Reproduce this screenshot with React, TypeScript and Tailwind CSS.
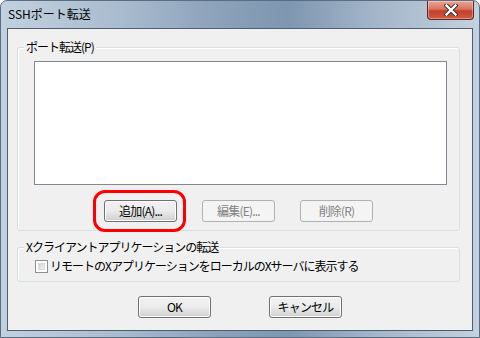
import React from 'react';

const font = { fontFamily: '"Noto Sans CJK JP", "Liberation Sans", sans-serif' };

interface BtnProps {
  label: string;
  disabled?: boolean;
}

const WinButton: React.FC<BtnProps> = ({ label, disabled }) =>
  disabled ? (
    <div className="w-[73px] h-[22px] rounded-[3px] border border-[#adb2b5] bg-[#f4f4f4] flex items-center justify-center text-[12px] tracking-[-0.8px] text-[#838383] leading-none">
      {label}
    </div>
  ) : (
    <div className="w-[73px] h-[22px] rounded-[3px] border border-[#707070] bg-gradient-to-b from-[#f2f2f2] via-[#ebebeb] to-[#cfcfcf] flex items-center justify-center text-[12px] tracking-[-0.8px] text-black leading-none shadow-[inset_0_0_0_1px_#fcfcfc]">
      {label}
    </div>
  );

const CloseIcon = () => (
  <svg width="14" height="12" viewBox="0 0 14 12">
    <path d="M2.5 1.5 L11.5 10.5 M11.5 1.5 L2.5 10.5" stroke="#3a2a2a" strokeWidth="4.2" strokeLinecap="square" />
    <path d="M2.5 1.5 L11.5 10.5 M11.5 1.5 L2.5 10.5" stroke="#ffffff" strokeWidth="2.4" strokeLinecap="square" />
  </svg>
);

export default function App() {
  return (
    <div
      style={font}
      className="w-[480px] h-[338px] flex flex-col rounded-t-[7px] border border-[#5a6d82] bg-[linear-gradient(90deg,#c2d1e0_0%,#a9bbce_25%,#8ca2ba_45%,#7e96b0_60%,#a3b5c9_78%,#c4d1de_100%)] overflow-hidden"
    >
      {/* Title bar */}
      <div className="h-[27px] flex items-start justify-between">
        <span className="mt-[6px] ml-[7px] text-[12px] text-black leading-[14px]">SSHポート転送</span>
        <div className="mr-[5px] w-[47px] h-[19px] rounded-b-[4px] border border-t-0 border-[#5b2a26] bg-[linear-gradient(180deg,#e9a693_0%,#d9735e_45%,#c0402c_55%,#d45a3e_100%)] flex items-center justify-center shadow-[inset_0_0_0_1px_rgba(255,255,255,0.35)]">
          <CloseIcon />
        </div>
      </div>

      {/* Client area */}
      <div className="mx-[6px] h-[303px] border border-[#4d5e70] bg-[#f0f0f0] flex flex-col">
        {/* Port forwarding group */}
        <div className="relative ml-[9px] mr-[12px] mt-[18px] h-[184px] rounded-[3px] border border-[#d5dfe5] shadow-[inset_1px_1px_0_#ffffff] flex flex-col">
          <span className="absolute -top-[8px] left-[6px] px-[2px] bg-[#f0f0f0] text-[12px] tracking-[-1px] leading-[14px] text-black">
            ポート転送(P)
          </span>
          <div className="ml-[16px] mr-[12px] mt-[13px] h-[124px] border border-[#828790] bg-white" />
          <div className="flex mt-[15px] ml-[86px] gap-[25px]">
            <div className="relative">
              <WinButton label="追加(A)..." />
              <div className="absolute -left-[11px] -top-[10px] w-[93px] h-[42px] rounded-[12px] border-[3px] border-[#ff0000]" />
            </div>
            <WinButton label="編集(E)..." disabled />
            <WinButton label="削除(R)" disabled />
          </div>
        </div>

        {/* X forwarding group */}
        <div className="relative ml-[9px] mr-[12px] mt-[16px] h-[35px] rounded-[3px] border border-[#d5dfe5] shadow-[inset_1px_1px_0_#ffffff] flex items-start">
          <span className="absolute -top-[8px] left-[6px] px-[2px] bg-[#f0f0f0] text-[12px] tracking-[-1px] leading-[14px] text-black">
            Xクライアントアプリケーションの転送
          </span>
          <div className="flex items-center mt-[11px] ml-[17px]">
            <div className="w-[13px] h-[13px] border border-[#8e8f8f] bg-white p-[2px]">
              <div className="w-full h-full bg-gradient-to-br from-[#cbcfd5] to-[#f6f6f6] border border-[#d8d8d8]" />
            </div>
            <span className="ml-[2px] text-[12px] tracking-[-1px] leading-[14px] text-black">
              リモートのXアプリケーションをローカルのXサーバに表示する
            </span>
          </div>
        </div>

        {/* Dialog buttons */}
        <div className="flex mt-[14px] ml-[130px] gap-[58px]">
          <WinButton label="OK" />
          <WinButton label="キャンセル" />
        </div>
      </div>
    </div>
  );
}
